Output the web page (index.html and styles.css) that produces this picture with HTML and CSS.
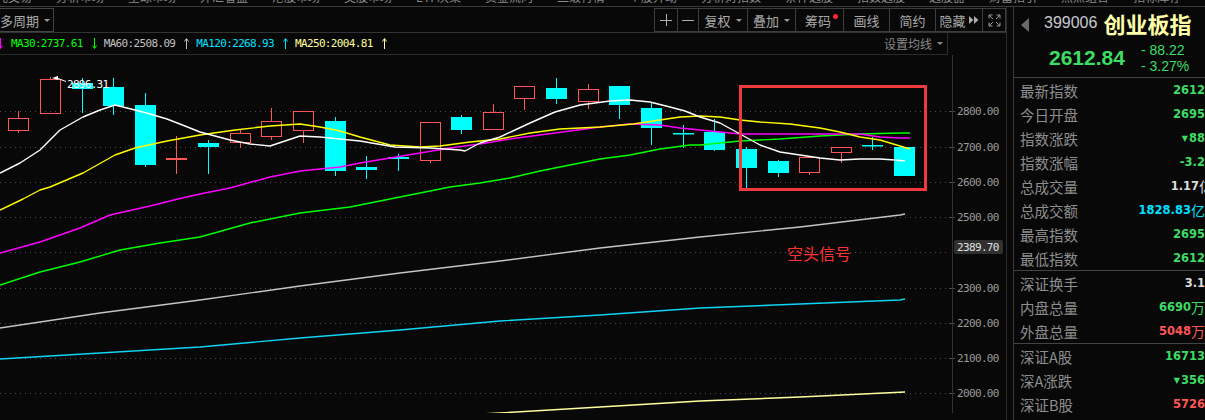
FILE: index.html
```html
<!DOCTYPE html>
<html lang="zh-CN">
<head>
<meta charset="utf-8">
<title>创业板指 K线</title>
<link rel="stylesheet" href="styles.css">
</head>
<body>
<nav class="topnav">
  <div class="topnav-inner">
    <span>委托交易</span><span>分析市场</span><span>全球市场</span><span>外汇看盘</span><span>港股市场</span><span>美股市场</span><span>ETF决策</span><span>资金流向</span><span>二级行情</span><span>个股异动</span><span>分析对指数</span><span>条件选股</span><span>指数选股</span><span>选股器</span><span>财富指引</span><span>热点组合</span><span>指标库存</span>
  </div>
</nav>
<div class="main">
  <section class="kline">
    <div class="toolbar">
      <div class="period">多周期<i class="caret"></i></div>
      <div class="tools">
        <span class="tb w23" title="放大"><svg class="pm" width="12" height="12" viewBox="0 0 12 12"><path d="M0 6.5H12M6.5 0V12"/></svg></span>
        <span class="tb w21" title="缩小"><svg class="pm" width="12" height="12" viewBox="0 0 12 12"><path d="M0 6.5H12"/></svg></span>
        <span class="tb w49">复权<i class="caret"></i></span>
        <span class="tb w48">叠加<i class="caret"></i></span>
        <span class="tb w48 chip">筹码<i class="dot"></i></span>
        <span class="tb w46">画线</span>
        <span class="tb w46">简约</span>
        <span class="tb w47">隐藏<svg class="ff" width="10" height="8" viewBox="0 0 10 8"><polygon points="0,0 4.5,4 0,8"/><polygon points="5,0 9.5,4 5,8"/></svg></span>
        <span class="tb w23"><svg width="13" height="13" viewBox="0 0 13 13" class="fs"><path d="M1 4.5V1h3.5M1 1l4 4M12 4.5V1H8.5M12 1L8 5M1 8.5V12h3.5M1 12l4-4M12 8.5V12H8.5M12 12L8 8"/></svg></span>
      </div>
    </div>
    <div class="mabar">
      <div class="ma-list">
        <svg class="arr mg" width="5" height="11" viewBox="0 0 5 11"><path d="M2.5 0V10M0.5 7.5L2.5 10.5L4.5 7.5"/></svg>
        <span class="ma ma30">MA30:2737.61</span>
        <svg class="arr gr" width="5" height="11" viewBox="0 0 5 11"><path d="M2.5 0V10M0.5 7.5L2.5 10.5L4.5 7.5"/></svg>
        <span class="ma ma60">MA60:2508.09</span>
        <svg class="arr gy" width="5" height="11" viewBox="0 0 5 11"><path d="M2.5 11V1M0.5 3.5L2.5 0.5L4.5 3.5"/></svg>
        <span class="ma ma120">MA120:2268.93</span>
        <svg class="arr cy" width="5" height="11" viewBox="0 0 5 11"><path d="M2.5 11V1M0.5 3.5L2.5 0.5L4.5 3.5"/></svg>
        <span class="ma ma250">MA250:2004.81</span>
        <svg class="arr ly" width="5" height="11" viewBox="0 0 5 11"><path d="M2.5 11V1M0.5 3.5L2.5 0.5L4.5 3.5"/></svg>
      </div>
      <div class="ma-set">设置均线<i class="caret"></i></div>
    </div>
    <div class="chart">
      <svg class="kchart" width="1007" height="358" viewBox="0 55 1007 358">
        <g class="grid">
          <line x1="0" y1="111.5" x2="950" y2="111.5"/>
          <line x1="0" y1="147.5" x2="950" y2="147.5"/>
          <line x1="0" y1="182.5" x2="950" y2="182.5"/>
          <line x1="0" y1="217.5" x2="950" y2="217.5"/>
          <line x1="0" y1="252.5" x2="950" y2="252.5"/>
          <line x1="0" y1="288.5" x2="950" y2="288.5"/>
          <line x1="0" y1="323.5" x2="950" y2="323.5"/>
          <line x1="0" y1="358.5" x2="950" y2="358.5"/>
          <line x1="0" y1="393.5" x2="950" y2="393.5"/>
        </g>
        <g class="ticks">
          <line x1="949" y1="111.5" x2="955" y2="111.5"/>
          <line x1="949" y1="147.5" x2="955" y2="147.5"/>
          <line x1="949" y1="182.5" x2="955" y2="182.5"/>
          <line x1="949" y1="217.5" x2="955" y2="217.5"/>
          <line x1="949" y1="288.5" x2="955" y2="288.5"/>
          <line x1="949" y1="323.5" x2="955" y2="323.5"/>
          <line x1="949" y1="358.5" x2="955" y2="358.5"/>
          <line x1="949" y1="393.5" x2="955" y2="393.5"/>
        </g>
        <line class="axis" x1="952.5" y1="55" x2="952.5" y2="413"/>

        <g class="candles">
          <line class="rw" x1="18.5" y1="111" x2="18.5" y2="118"/><line class="rw" x1="18.5" y1="131" x2="18.5" y2="133"/><rect class="rd" x="8.5" y="118.5" width="20" height="12"/>
          <line class="rw" x1="50.5" y1="77" x2="50.5" y2="79"/><rect class="rd" x="40.5" y="79.5" width="20" height="34"/>
          <line class="cw" x1="82.5" y1="78" x2="82.5" y2="113"/><rect class="cu" x="72" y="83" width="21" height="6"/>
          <line class="cw" x1="113.5" y1="78" x2="113.5" y2="115"/><rect class="cu" x="103" y="87" width="21" height="19"/>
          <line class="cw" x1="145.5" y1="93" x2="145.5" y2="167"/><rect class="cu" x="135" y="105" width="21" height="60"/>
          <line class="rw" x1="176.5" y1="136" x2="176.5" y2="174"/><rect class="rf" x="166" y="158" width="21" height="2"/>
          <line class="cw" x1="208.5" y1="140" x2="208.5" y2="174"/><rect class="cu" x="198" y="143" width="21" height="4"/>
          <line class="rw" x1="240.5" y1="129" x2="240.5" y2="133"/><line class="rw" x1="240.5" y1="143" x2="240.5" y2="148"/><rect class="rd" x="230.5" y="133.5" width="20" height="9"/>
          <line class="rw" x1="271.5" y1="108" x2="271.5" y2="121"/><line class="rw" x1="271.5" y1="137" x2="271.5" y2="140"/><rect class="rd" x="261.5" y="121.5" width="20" height="15"/>
          <line class="rw" x1="303.5" y1="131" x2="303.5" y2="143"/><rect class="rd" x="293.5" y="111.5" width="20" height="19"/>
          <line class="cw" x1="335.5" y1="117" x2="335.5" y2="176"/><rect class="cu" x="325" y="121" width="21" height="50"/>
          <line class="cw" x1="366.5" y1="156" x2="366.5" y2="179"/><rect class="cu" x="356" y="167" width="21" height="3"/>
          <line class="cw" x1="398.5" y1="154" x2="398.5" y2="171"/><rect class="cu" x="388" y="157" width="21" height="2"/>
          <line class="rw" x1="430.5" y1="161" x2="430.5" y2="163"/><rect class="rd" x="420.5" y="122.5" width="20" height="38"/>
          <line class="cw" x1="461.5" y1="115" x2="461.5" y2="134"/><rect class="cu" x="451" y="117" width="21" height="13"/>
          <line class="rw" x1="493.5" y1="104" x2="493.5" y2="112"/><rect class="rd" x="483.5" y="112.5" width="20" height="17"/>
          <line class="rw" x1="524.5" y1="99" x2="524.5" y2="110"/><rect class="rd" x="514.5" y="86.5" width="20" height="12"/>
          <line class="cw" x1="556.5" y1="78" x2="556.5" y2="104"/><rect class="cu" x="546" y="88" width="21" height="11"/>
          <line class="rw" x1="588.5" y1="84" x2="588.5" y2="89"/><line class="rw" x1="588.5" y1="102" x2="588.5" y2="109"/><rect class="rd" x="578.5" y="89.5" width="20" height="12"/>
          <line class="cw" x1="619.5" y1="86" x2="619.5" y2="119"/><rect class="cu" x="609" y="86" width="21" height="19"/>
          <line class="cw" x1="651.5" y1="102" x2="651.5" y2="145"/><rect class="cu" x="641" y="108" width="21" height="20"/>
          <line class="cw" x1="683.5" y1="125" x2="683.5" y2="148"/><rect class="cu" x="673" y="133" width="21" height="1.5"/>
          <line class="cw" x1="714.5" y1="119" x2="714.5" y2="151"/><rect class="cu" x="704" y="132" width="21" height="18"/>
          <line class="cw" x1="746.5" y1="147" x2="746.5" y2="188"/><rect class="cu" x="736" y="149" width="21" height="19"/>
          <line class="cw" x1="778.5" y1="160" x2="778.5" y2="177"/><rect class="cu" x="768" y="161" width="21" height="12"/>
          <line class="rw" x1="809.5" y1="173" x2="809.5" y2="175"/><rect class="rd" x="799.5" y="157.5" width="20" height="15"/>
          <line class="rw" x1="841.5" y1="153" x2="841.5" y2="163"/><rect class="rd" x="831.5" y="147.5" width="20" height="5"/>
          <line class="cw" x1="872.5" y1="137" x2="872.5" y2="150"/><rect class="cu" x="862" y="145" width="21" height="1.5"/>
          <rect class="cu" x="894" y="147" width="21" height="29"/>
        </g>

        <g class="mas">
          <polyline class="ma-ly" points="300,424 380,419 500,413 600,407 700,401 800,397 905,392"/>
          <polyline class="ma-cy" points="0,359 100,353 200,347 300,338 400,330 500,321 600,315 700,308 800,304 900,300 905,299"/>
          <polyline class="ma-gy" points="0,328 100,313 200,300 300,286 400,273 500,261 600,248 700,237 800,227 900,215 905,214"/>
          <polyline class="ma-gr" points="0,285 40,272 80,262 120,250 160,243 200,237 250,223 300,213 350,207 390,199 420,193 450,187 480,183 510,178 540,171 570,165 600,159 630,155 660,149 690,145 700,145 740,141 780,139 820,136 860,134 900,133 910,133"/>
          <polyline class="ma-mg" points="0,253 40,242 80,228 110,215 150,206 178,199 200,194 230,188 270,177 300,171 320,169 340,167 360,163 390,158 420,153 450,148 480,144 510,139 540,135 570,131 600,127 630,124 660,125 680,128 700,130 720,132 740,134 860,134 880,137 900,138 910,138"/>
          <polyline class="ma-ye" points="0,210 23,199 40,190 50,187 83,173 115,155 135,148 167,141 200,135 235,130 270,126 300,124 320,127 340,131 360,137 390,145 420,147 440,146 470,142 500,139 530,133 560,129 600,127 633,124 660,120 680,117 700,116 720,117 740,120 760,122 790,124 820,128 840,132 860,137 880,140 900,146 910,149"/>
          <polyline class="ma-wh" points="0,173 20,163 40,150 60,130 83,117 100,110 115,105 135,110 150,114 167,119 185,126 200,132 215,136 230,140 250,144 270,146 285,141 300,136 320,137 340,139 360,141 395,147 430,148 460,150 465,151 480,143 500,137 515,130 530,123 555,112 580,105 610,101 630,100 650,102 670,107 685,111 700,117 720,123 740,134 760,145 780,152 800,155 820,158 840,160 860,159 880,159 895,160 905,161"/>
        </g>

        <g class="hi-mark">
          <polygon points="52,78 58,76 58,80"/>
          <line x1="58" y1="78.5" x2="66" y2="81.5"/>
        </g>
        <text class="hi-text" x="67" y="88">2896.31</text>

        <rect class="signal-box" x="740.5" y="86.5" width="185" height="103"/>
        <text class="signal-text" x="787" y="260">空头信号</text>

        <g class="ax">
          <text x="957" y="115">2800.00</text>
          <text x="957" y="151">2700.00</text>
          <text x="957" y="186">2600.00</text>
          <text x="957" y="221">2500.00</text>
          <text x="957" y="292">2300.00</text>
          <text x="957" y="327">2200.00</text>
          <text x="957" y="362">2100.00</text>
          <text x="957" y="397">2000.00</text>
        </g>
        <rect class="cur-box" x="954" y="240" width="49" height="14" rx="2"/>
        <text class="cur-text" x="957" y="251">2389.70</text>
      </svg>
    </div>
  </section>

  <aside class="panel">
    <div class="phead">
      <div class="ptitle">
        <i class="tri"></i>
        <span class="code">399006</span>
        <span class="name">创业板指</span>
      </div>
      <div class="pquote">
        <span class="last">2612.84</span>
        <div class="chg"><span>- 88.22</span><span>- 3.27%</span></div>
      </div>
    </div>
    <div class="pgroup">
      <div class="row"><span class="lbl">最新指数</span><span class="val g">2612</span></div>
      <div class="row"><span class="lbl">今日开盘</span><span class="val g">2695</span></div>
      <div class="row"><span class="lbl">指数涨跌</span><span class="val g"><i class="down">▼</i>88</span></div>
      <div class="row"><span class="lbl">指数涨幅</span><span class="val g">-3.2</span></div>
      <div class="row"><span class="lbl">总成交量</span><span class="val w over">1.17<i class="unit">亿</i></span></div>
      <div class="row"><span class="lbl">总成交额</span><span class="val c">1828.83<i class="unit">亿</i></span></div>
      <div class="row"><span class="lbl">最高指数</span><span class="val g">2695</span></div>
      <div class="row"><span class="lbl">最低指数</span><span class="val g">2612</span></div>
    </div>
    <div class="pgroup">
      <div class="row"><span class="lbl">深证换手</span><span class="val w">3.1</span></div>
      <div class="row"><span class="lbl">内盘总量</span><span class="val g">6690<i class="unit">万</i></span></div>
      <div class="row"><span class="lbl">外盘总量</span><span class="val r">5048<i class="unit">万</i></span></div>
    </div>
    <div class="pgroup last-group">
      <div class="row"><span class="lbl">深证A股</span><span class="val g">16713</span></div>
      <div class="row"><span class="lbl">深A涨跌</span><span class="val g"><i class="down">▼</i>356</span></div>
      <div class="row"><span class="lbl">深证B股</span><span class="val r">5726</span></div>
    </div>
  </aside>
</div>
</body>
</html>
```

FILE: styles.css
```css
* { box-sizing: border-box; margin: 0; padding: 0; }
html, body { width: 1205px; height: 420px; overflow: hidden; background: #080808; }
body { font-family: "Noto Sans CJK SC", "Liberation Sans", sans-serif; color: #aaa; }
i { font-style: normal; }

/* top navigation (cut off by the window edge) */
.topnav { height: 7px; border-bottom: 1px solid #3a3a3a; overflow: hidden; }
.topnav-inner { display: flex; gap: 24px; margin-top: -9px; margin-left: -16px; font-size: 12px; line-height: 12px; color: #8a8a8a; white-space: nowrap; }

.main { display: flex; height: 413px; }

/* left: kline area */
.kline { width: 1007px; flex: none; border-right: 1px solid #2c2c2c; display: flex; flex-direction: column; }

.toolbar { height: 26px; flex: none; padding-top: 1px; border-bottom: 1px solid #333; display: flex; justify-content: space-between; align-items: flex-start; }
.period { width: 56px; height: 24px; margin-left: -2px; border: 1px solid #444; display: flex; align-items: center; padding-left: 1px; font-size: 13px; color: #aaa; }
.caret { display: inline-block; width: 0; height: 0; border-left: 3px solid transparent; border-right: 3px solid transparent; border-top: 3px solid #999; margin-left: 5px; }

.tools { display: flex; height: 24px; border-left: 1px solid #3c3c3c; }
.tb { height: 24px; display: flex; align-items: center; justify-content: center; border-top: 1px solid #3c3c3c; border-bottom: 1px solid #3c3c3c; border-right: 1px solid #3c3c3c; font-size: 13px; color: #aaa; position: relative; }
.w23 { width: 23px; } .w21 { width: 21px; } .w49 { width: 49px; } .w48 { width: 48px; } .w46 { width: 46px; } .w47 { width: 47px; }
.tb .pm { fill: none; stroke: #b0b0b0; stroke-width: 1; }
.tb .ff { margin-left: 3px; fill: #aaa; }
.tb .fs { fill: none; stroke: #9a9a9a; stroke-width: 1; }
.chip { justify-content: flex-start; padding-left: 9px; }
.dot { position: absolute; left: 37px; top: 5px; width: 5px; height: 5px; border-radius: 50%; background: #ff2a2a; }

.mabar { width: 948px; height: 22px; flex: none; border-bottom: 1px solid #2a2a2a; border-right: 1px solid #2e2e2e; display: flex; justify-content: space-between; align-items: center; }
.ma-list { display: flex; align-items: center; margin-left: -2px; }
.ma { font-family: "DejaVu Sans Mono", monospace; font-size: 11px; letter-spacing: -0.65px; line-height: 12px; }
.arr { fill: none; stroke-width: 1; }
.arr.mg { stroke: #ff00ff; margin-right: 8px; }
.arr.gr { stroke: #00ff00; margin: 0 7px 0 9px; }
.arr.gy { stroke: #c0c0c0; margin: 0 7px 0 9px; }
.arr.cy { stroke: #00e0ff; margin: 0 7px 0 9px; }
.arr.ly { stroke: #ffff99; margin: 0 7px 0 9px; }
.ma30 { color: #00ff00; }
.ma60 { color: #c0c0c0; }
.ma120 { color: #00e0ff; }
.ma250 { color: #ffff99; }
.ma-set { font-size: 12px; color: #888; margin-right: 4px; display: flex; align-items: center; }
.ma-set .caret { border-top-color: #888; margin-left: 5px; }

.chart { flex: 1; overflow: hidden; }
.kchart { display: block; }
.grid line { stroke: #4c4c4c; stroke-dasharray: 1 4; }
.ticks line { stroke: #4c4c4c; }
.axis { stroke: #333; }

.cu { fill: #00ffff; }
.cw { stroke: #00ffff; stroke-width: 1; }
.rd { fill: none; stroke: #ff5555; stroke-width: 1; }
.rf { fill: #ff5555; }
.rw { stroke: #ff5555; stroke-width: 1; }

.mas polyline { fill: none; stroke-width: 1.4; stroke-linejoin: round; }
.ma-wh { stroke: #ffffff; }
.ma-ye { stroke: #ffff00; }
.ma-mg { stroke: #ff00ff; }
.ma-gr { stroke: #00ff00; }
.ma-gy { stroke: #c4c4c4; }
.ma-cy { stroke: #10d4f4; }
.ma-ly { stroke: #ffffa0; }

.hi-mark polygon { fill: #ffffff; }
.hi-mark line { stroke: #ffffff; stroke-width: 1; }
.hi-text { fill: #ffffff; font-family: "DejaVu Sans Mono", monospace; font-size: 11px; letter-spacing: -0.7px; }

.signal-box { fill: none; stroke: #f03a3a; stroke-width: 3; }
.signal-text { fill: #ff3030; font-family: "Noto Sans CJK SC", sans-serif; font-size: 16px; }

.ax text { fill: #9a9a9a; font-family: "DejaVu Sans Mono", monospace; font-size: 11px; letter-spacing: -0.65px; }
.cur-box { fill: #303030; }
.cur-text { fill: #e0e0e0; font-family: "DejaVu Sans Mono", monospace; font-size: 11px; letter-spacing: -0.65px; }

/* right panel */
.panel { flex: 1; margin-left: 6px; border-left: 1px solid #3a3a3a; display: flex; flex-direction: column; overflow: hidden; }
.phead { height: 71px; flex: none; border-bottom: 1px solid #444; }
.ptitle { height: 32px; display: flex; align-items: center; padding-left: 7px; }
.tri { width: 0; height: 0; border-top: 7px solid transparent; border-bottom: 7px solid transparent; border-right: 8px solid #6a6a6a; margin-top: 4px; }
.code { margin-left: 15px; font-family: "Liberation Sans", sans-serif; font-size: 16px; color: #c8c8d0; }
.name { margin-left: 6px; font-size: 22px; font-weight: bold; color: #ffffa8; line-height: 26px; }
.pquote { height: 38px; display: flex; align-items: center; padding-left: 35px; }
.last { font-family: "Liberation Sans", sans-serif; font-weight: bold; font-size: 21px; color: #3ddc64; }
.chg { margin-left: 16px; display: flex; flex-direction: column; font-family: "Liberation Sans", sans-serif; font-size: 14px; line-height: 16px; color: #3ddc64; }

.pgroup { border-bottom: 1px solid #444; flex: none; }
.last-group { border-bottom: none; }
.row { height: 24px; display: flex; justify-content: space-between; align-items: center; padding-left: 6px; }
.lbl { font-size: 14.5px; color: #8e8e8e; }
.val { font-family: "DejaVu Sans", sans-serif; font-weight: bold; font-size: 11.5px; white-space: nowrap; display: flex; align-items: center; }
.val.over { margin-right: -8px; }
.unit { font-family: "Noto Sans CJK SC", sans-serif; font-weight: normal; font-size: 14px; }
.down { font-size: 8px; margin-right: 1px; }
.g { color: #3ddc64; }
.r { color: #ff5555; }
.c { color: #00e0ff; }
.w { color: #dcdcdc; }
```
